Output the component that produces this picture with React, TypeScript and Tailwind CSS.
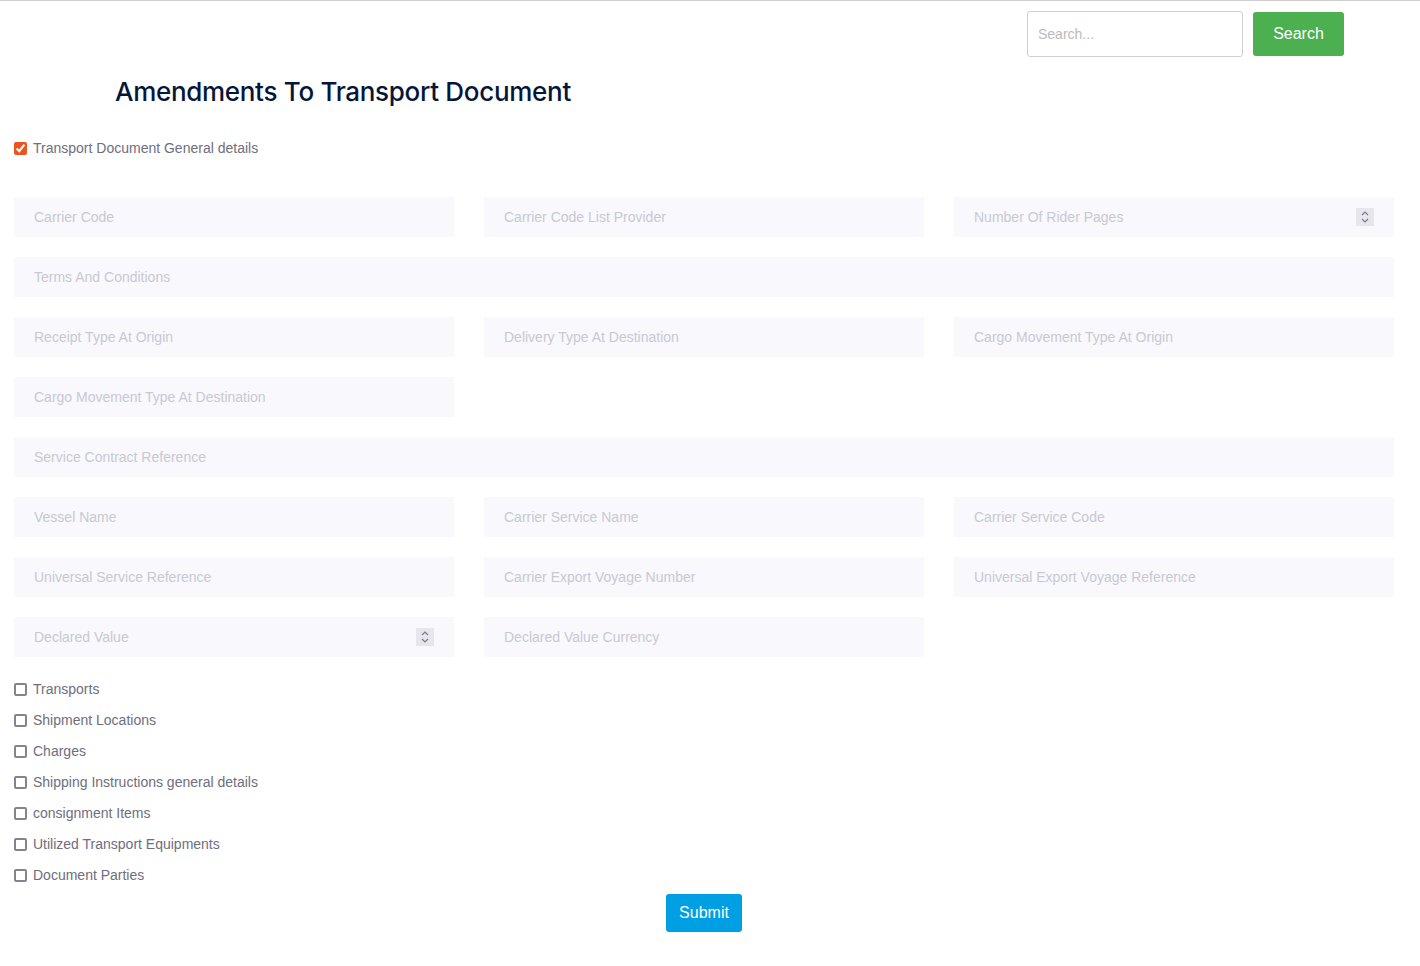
import React from 'react';

type Field = { label: string; span?: 'full'; number?: boolean };

const rows: Field[][] = [
  [{ label: 'Carrier Code' }, { label: 'Carrier Code List Provider' }, { label: 'Number Of Rider Pages', number: true }],
  [{ label: 'Terms And Conditions', span: 'full' }],
  [{ label: 'Receipt Type At Origin' }, { label: 'Delivery Type At Destination' }, { label: 'Cargo Movement Type At Origin' }],
  [{ label: 'Cargo Movement Type At Destination' }],
  [{ label: 'Service Contract Reference', span: 'full' }],
  [{ label: 'Vessel Name' }, { label: 'Carrier Service Name' }, { label: 'Carrier Service Code' }],
  [{ label: 'Universal Service Reference' }, { label: 'Carrier Export Voyage Number' }, { label: 'Universal Export Voyage Reference' }],
  [{ label: 'Declared Value', number: true }, { label: 'Declared Value Currency' }],
];

const sections = [
  'Transports',
  'Shipment Locations',
  'Charges',
  'Shipping Instructions general details',
  'consignment Items',
  'Utilized Transport Equipments',
  'Document Parties',
];

const Spinner = () => (
  <div className="absolute right-5 top-1/2 -translate-y-1/2 w-[18px] h-[18px] bg-[#e6e6ec] flex items-center justify-center">
    <svg width="10" height="14" viewBox="0 0 10 14" fill="none" stroke="#7a7a86" strokeWidth="1.2">
      <path d="M2 5 L5 2 L8 5" />
      <path d="M2 9 L5 12 L8 9" />
    </svg>
  </div>
);

const Input = ({ f }: { f: Field }) => (
  <div className={f.span === 'full' ? 'relative col-span-3' : 'relative'}>
    <input
      type="text"
      placeholder={f.label}
      className="w-full h-10 bg-[#f8f8fd] pl-5 pr-12 text-[14px] text-[#555] placeholder:text-[#c9c9d2] outline-none"
    />
    {f.number && <Spinner />}
  </div>
);

const Check = ({ label, checked }: { label: string; checked?: boolean }) => (
  <label className="flex items-center gap-[6px] text-[14px] text-[#6e6e7e] leading-[17px]">
    {checked ? (
      <input type="checkbox" defaultChecked className="m-0 w-[13px] h-[13px] accent-[#e9541f]" />
    ) : (
      <input
        type="checkbox"
        className="m-0 w-[13px] h-[13px] appearance-none border-2 border-[#858392] rounded-[2px] bg-white checked:bg-[#e9541f] checked:border-[#e9541f]"
      />
    )}
    <span>{label}</span>
  </label>
);

export default function App() {
  return (
    <div className="min-h-[966px] bg-white border-t border-[#cfcfcf]" style={{ fontFamily: '"Liberation Sans", Arial, sans-serif' }}>
      <div className="flex justify-end gap-[10px] pr-[76px] pt-[10px]">
        <input
          type="text"
          placeholder="Search..."
          className="w-[216px] h-[46px] border border-[#d0d0d0] rounded-[3px] px-[10px] text-[14px] placeholder:text-[#bbb] outline-none"
        />
        <button className="w-[91px] h-[44px] mt-px bg-[#4caf50] text-white text-[16px] rounded-[3px]">Search</button>
      </div>

      <h1
        className="pl-[115px] mt-[18px] text-[26px] font-medium text-[#06163a] leading-[34px] tracking-[-0.3px]"
        style={{ fontFamily: 'Inter, "Noto Sans", sans-serif' }}
      >
        Amendments To Transport Document
      </h1>

      <div className="pl-[14px] pr-[26px] pt-[31px]">
        <Check label="Transport Document General details" checked />

        <div className="grid grid-cols-3 gap-x-[30px] gap-y-5 mt-[40px]">
          {rows.map((row, i) => (
            <React.Fragment key={i}>
              {row.map((f) => (
                <Input key={f.label} f={f} />
              ))}
              {row.length === 1 && row[0].span !== 'full' && (
                <>
                  <div />
                  <div />
                </>
              )}
              {row.length === 2 && <div />}
            </React.Fragment>
          ))}
        </div>

        <div className="flex flex-col gap-[14px] mt-[24px]">
          {sections.map((s) => (
            <Check key={s} label={s} />
          ))}
        </div>

        <div className="flex justify-center mt-[10px]">
          <button className="h-[38px] px-[13px] bg-[#009fe3] text-white text-[16px] rounded-[3px]">Submit</button>
        </div>
      </div>
    </div>
  );
}
